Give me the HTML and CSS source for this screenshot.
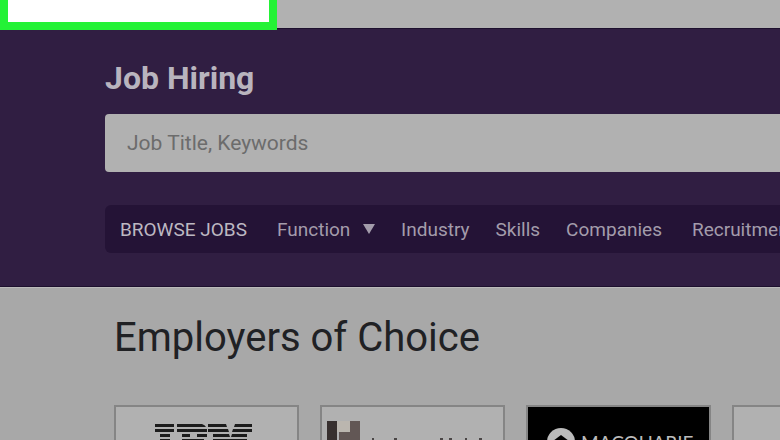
FILE: index.html
```html
<!DOCTYPE html>
<html lang="en">
	<head>
		<meta charset="utf-8" />
		<title>Job Hiring</title>
		<link rel="stylesheet" href="styles.css">
	</head>
	<body>
		<div class="topbar">
			<div class="highlight"></div>
		</div>

		<header class="hero">
			<h1><label for="keywords">Job Hiring</label></h1>
			<input type="text" id="keywords" class="search" placeholder="Job Title, Keywords" />
			<nav class="browse">
				<strong>BROWSE JOBS</strong>
				<a href="#">Function
					<svg class="caret" viewBox="0 0 12 10"><path d="M0 0h12L6 10z"/></svg>
				</a>
				<a href="#">Industry</a>
				<a href="#">Skills</a>
				<a href="#" class="companies">Companies</a>
				<a href="#">Recruitment</a>
			</nav>
		</header>

		<main class="employers">
			<h2>Employers of Choice</h2>
			<div class="logos">
				<a href="#" class="logo" aria-label="IBM">
					<svg viewBox="0 0 180 80">
						<g fill="#1c1c1c">
							<path d="M39 17h19v3H39zM61 17h25q3 1 4 3H61zM92 17h18l1 3H92zM119 17h17v3h-18z"/>
							<path d="M39 22h19v3H39zM61 22h30v3H61zM92 22h20l1 3H92zM117 22h19v3h-20z"/>
							<path d="M44 27h10v3H44zM66 27h8v3h-8zM81 27h10v3H81zM97 27h16l1 3H97zM116 27h15v3h-16z"/>
							<path d="M44 32h10v3H44zM66 32h22v3H66zM97 32h34v3H97z"/>
						</g>
					</svg>
				</a>
				<a href="#" class="logo" aria-label="Employer">
					<svg viewBox="0 0 180 80">
						<path d="M15 14h13v11H15z" fill="#bbb6af"/>
						<path d="M5 14h10v40H5z" fill="#38302f"/>
						<path d="M28 14h10v40H28zM17 25h11v12H17z" fill="#625755"/>
						<path d="M50 31h2v9h-2zM72 31h3v9h-3zM118 31h3v9h-3zM127 31h3v9h-3zM143 31h2v9h-2zM157 31h3v9h-3z" fill="#4a4646"/>
					</svg>
				</a>
				<a href="#" class="logo dark" aria-label="Macquarie">
					<svg viewBox="0 0 180 80">
						<circle cx="33" cy="35" r="14" fill="#bbb"/>
						<path d="M33 28l8 6v9H25v-9z"/>
						<text x="53" y="43">MACQUARIE</text>
					</svg>
				</a>
				<a href="#" class="logo" aria-label="Employer"></a>
			</div>
		</main>
	</body>
</html>
```

FILE: styles.css
```css
*{
	margin: 0;
	padding: 0;
	box-sizing: border-box;
}
body{
	font-family: Roboto, "Liberation Sans", sans-serif;
	background: #a8a8a8;
	overflow: hidden;
}
a{
	color: inherit;
	text-decoration: none;
}
.topbar{
	height: 28px;
	background: #b1b1b1;
	position: relative;
}
.highlight{
	position: absolute;
	left: 0;
	top: -40px;
	width: 277px;
	height: 70px;
	background: #fff;
	border: 8px solid #24f236;
}
.hero{
	padding: 31px 0 33px 105px;
	background: #301e42;
	border-top: 1px solid #1d102e;
	border-bottom: 1px solid #1d102e;
}
.hero h1{
	font-size: 32px;
	line-height: 36px;
	font-weight: 700;
	color: #b9b4be;
}
.search{
	display: block;
	width: 100%;
	height: 58px;
	margin-top: 18px;
	padding: 0 22px;
	background: #b1b1b1;
	border: 0;
	border-radius: 4px 0 0 4px;
	font: 21px Roboto, "Liberation Sans", sans-serif;
}
.search::placeholder{
	color: #6c6c6c;
	opacity: 1;
}
.browse{
	display: flex;
	align-items: center;
	height: 48px;
	margin-top: 33px;
	padding-left: 15px;
	background: #241336;
	border-radius: 6px 0 0 6px;
	font-size: 19px;
	white-space: nowrap;
	overflow: hidden;
	color: #a39cab;
}
.browse strong{
	margin-right: 30px;
	font-weight: 400;
	color: #bdb8c2;
}
.browse a{
	margin-right: 26px;
}
.browse .companies{
	margin-right: 30px;
}
.caret{
	width: 12px;
	height: 10px;
	margin-left: 8px;
	vertical-align: 2px;
	fill: #a39cab;
}
.employers{
	padding: 28px 0 0 114px;
	border-top: 1px solid #bbb;
}
.employers h2{
	font-size: 40px;
	line-height: 44px;
	font-weight: 400;
	color: #202124;
}
.logos{
	display: flex;
	gap: 21px;
	margin-top: 45px;
}
.logo{
	flex: 0 0 185px;
	height: 84px;
	background: #b1b1b1;
	border: 2px solid #858585;
}
.logo svg{
	display: block;
	width: 180px;
	height: 80px;
}
.logo.dark{
	background: #000;
}
.dark text{
	font: 19px Lato, "Liberation Sans", sans-serif;
	fill: #bbb;
}
```
